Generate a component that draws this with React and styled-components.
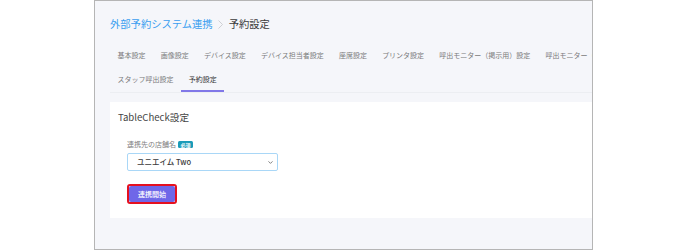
import React from 'react'
import styled, { createGlobalStyle } from 'styled-components'
import { ChevronDown } from 'lucide-react'

const tabs = [
  '基本設定',
  '画像設定',
  'デバイス設定',
  'デバイス担当者設定',
  '座席設定',
  'プリンタ設定',
  '呼出モニター（掲示用）設定',
  '呼出モニター（受付用）設定',
  'スタッフ呼出設定',
  '予約設定',
]

function App() {
  return (
    <>
      <GlobalStyle />
      <Page>
        <Frame>
          <Content>
            <Breadcrumb>
              <CrumbLink>外部予約システム連携</CrumbLink>
              <CrumbArrow viewBox="0 0 5 9" aria-hidden="true">
                <polyline points="0.5,0.5 4.5,4.5 0.5,8.5" />
              </CrumbArrow>
              <CrumbCurrent>予約設定</CrumbCurrent>
            </Breadcrumb>

            <TabBar>
              {tabs.map((t) => (
                <Tab key={t} $active={t === '予約設定'}>
                  {t}
                </Tab>
              ))}
            </TabBar>

            <Card>
              <CardTitle>TableCheck設定</CardTitle>
              <Form>
                <Label>
                  連携先の店舗名
                  <Required>必須</Required>
                </Label>
                <SelectWrap>
                  <Select defaultValue="two">
                    <option value="two">ユニエイム Two</option>
                  </Select>
                  <SelectIcon>
                    <ChevronDown size={7} strokeWidth={2.5} />
                  </SelectIcon>
                </SelectWrap>
                <Highlight>
                  <Button type="button">連携開始</Button>
                </Highlight>
              </Form>
            </Card>
          </Content>
        </Frame>
      </Page>
    </>
  )
}

const GlobalStyle = createGlobalStyle`
  * {
    box-sizing: border-box;
  }

  body {
    margin: 0;
    background: #fff;
    font-family: 'Noto Sans CJK JP', 'Noto Sans', sans-serif;
  }
`

const Page = styled.div`
  display: flex;
  padding-left: 94px;
  height: 251px;
`

const Frame = styled.div`
  width: 499px;
  height: 250px;
  border: 1px solid #b5b5b5;
  background: #f5f6fa;
  overflow: hidden;
`

const Content = styled.div`
  width: 605px;
  padding: 16px 0 0 15px;
`

const Breadcrumb = styled.div`
  display: flex;
  align-items: center;
  height: 14px;
  font-size: 10.3px;
  line-height: 14px;
`

const CrumbLink = styled.span`
  color: #3a9ef0;
`

const CrumbArrow = styled.svg`
  width: 5px;
  height: 9px;
  margin: 0 6px 0 5px;
  fill: none;
  stroke: #c4c6cc;
  stroke-width: 0.8;
`

const CrumbCurrent = styled.span`
  color: #3a3a3a;
`

const TabBar = styled.div`
  display: flex;
  flex-wrap: wrap;
  margin-top: 13px;
  border-bottom: 1px solid #eceef2;
`

const Tab = styled.div`
  height: 24px;
  padding: 0 7.6px;
  font-size: 7px;
  line-height: 23px;
  white-space: nowrap;
  color: ${(p) => (p.$active ? '#333' : '#7a7a7a')};
  border-bottom: 2px solid ${(p) => (p.$active ? '#8178e8' : 'transparent')};
`

const Card = styled.div`
  margin-top: 9px;
  padding: 8px 8px 14px;
  background: #fff;
`

const CardTitle = styled.div`
  font-size: 9.6px;
  line-height: 14px;
  color: #444;
`

const Form = styled.div`
  display: flex;
  flex-direction: column;
  align-items: flex-start;
  padding-left: 9px;
  margin-top: 15px;
`

const Label = styled.div`
  display: flex;
  align-items: center;
  gap: 2px;
  height: 10px;
  font-size: 7px;
  line-height: 10px;
  color: #808080;
`

const Required = styled.span`
  display: inline-flex;
  align-items: center;
  justify-content: center;
  width: 15px;
  height: 7px;
  border-radius: 1.5px;
  background: #1a9bb8;
  color: #fff;
  font-size: 5px;
  font-weight: 700;
  line-height: 7px;
`

const SelectWrap = styled.div`
  position: relative;
  margin-top: 4px;
  width: 151px;
  height: 18px;
`

const Select = styled.select`
  display: block;
  appearance: none;
  width: 100%;
  height: 18px;
  margin: 0;
  padding: 0 0 0 9px;
  border: 1px solid #a9d7f7;
  border-radius: 2px;
  background: #fff;
  font-family: inherit;
  font-size: 7.5px;
  font-weight: 500;
  line-height: 16px;
  color: #3a3a3a;
  outline: none;
`

const SelectIcon = styled.span`
  position: absolute;
  right: 4px;
  top: 5.5px;
  display: flex;
  color: #555;
  pointer-events: none;
`

const Highlight = styled.div`
  display: flex;
  margin-top: 13px;
  border: 2px solid #e5101f;
  border-radius: 3px;
`

const Button = styled.button`
  display: block;
  width: 46px;
  height: 16px;
  margin: 0;
  padding: 0;
  border: 0;
  border-radius: 2px;
  background: #6f67e8;
  color: #fff;
  font-family: inherit;
  font-size: 7px;
  font-weight: 500;
  line-height: 16px;
  cursor: pointer;
`

export default App
